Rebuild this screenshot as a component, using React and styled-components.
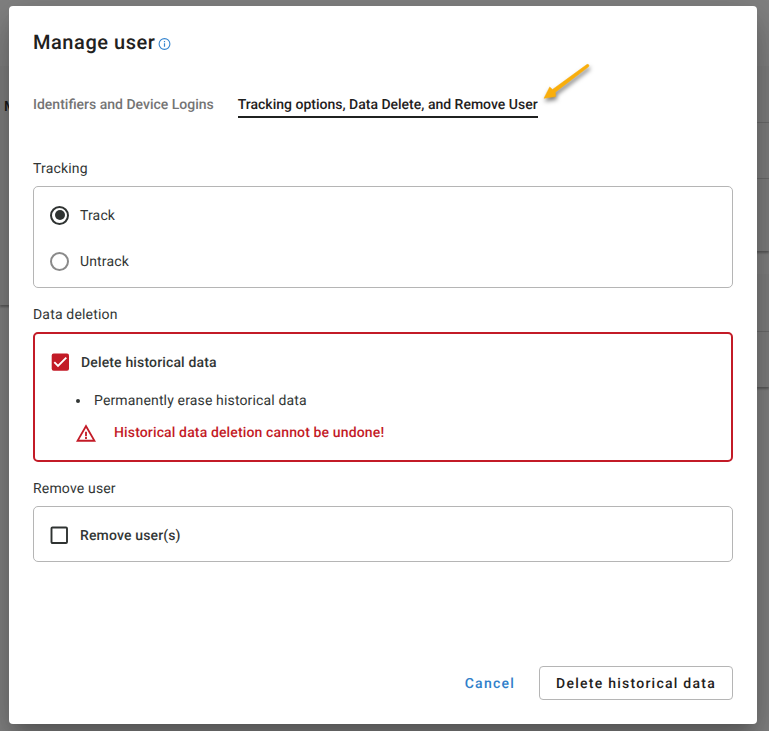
import React, { useState } from "react";
import styled, { createGlobalStyle } from "styled-components";

const GlobalStyle = createGlobalStyle`
  * {
    box-sizing: border-box;
  }
  body {
    margin: 0;
    overflow: hidden;
    font-family: Roboto, "Liberation Sans", sans-serif;
    color: #323635;
    text-rendering: geometricPrecision;
  }
`;

const Page = styled.div`
  position: relative;
  width: 769px;
  height: 731px;
  padding-top: 66px;
  display: flex;
  justify-content: space-between;
  align-items: flex-start;
  overflow: hidden;
  background: #828282;
`;

const BackColumn = styled.div`
  width: ${(props) => props.$width};
  display: flex;
  flex-direction: column;
  gap: 23px;
`;

const BackCard = styled.div`
  height: ${(props) => props.$height};
  padding-top: ${(props) => props.$top || "0"};
  background: #7f7f7f;
  box-shadow: 0 2px 2px rgba(0, 0, 0, 0.3);
`;

const BackRow = styled.div`
  height: 56px;
  border-top: 1px solid #6c6c6c;
`;

const BackTitle = styled.div`
  padding: 32px 0 0 4px;
  color: #181818;
  font-size: 14px;
  line-height: 18px;
  font-weight: 500;
`;

const Dialog = styled.div`
  position: absolute;
  top: 6px;
  left: 9px;
  width: 748px;
  height: 718px;
  padding: 24px;
  display: flex;
  flex-direction: column;
  background: #ffffff;
  border-radius: 4px;
  box-shadow: 0 11px 15px -7px rgba(0, 0, 0, 0.2),
    0 24px 38px 3px rgba(0, 0, 0, 0.14), 0 9px 46px 8px rgba(0, 0, 0, 0.12);
`;

const Title = styled.h1`
  margin: 0;
  height: 24px;
  display: flex;
  align-items: center;
  color: #1f2120;
  font-size: 20px;
  line-height: 24px;
  font-weight: 500;
  letter-spacing: 0.55px;
  white-space: nowrap;

  svg {
    margin: 4px 0 0 3px;
  }
`;

const Tabs = styled.div`
  display: flex;
  gap: 24px;
  margin-top: 40px;
`;

const Tab = styled.button`
  height: 24px;
  padding: 1px 0;
  border: 0;
  border-bottom: 2px solid
    ${(props) => (props.$active ? "#1f2120" : "transparent")};
  background: none;
  color: ${(props) => (props.$active ? "#1f2120" : "#747474")};
  font-family: inherit;
  font-size: 14px;
  line-height: 20px;
  font-weight: 500;
  text-rendering: inherit;
  white-space: nowrap;
`;

const SectionLabel = styled.div`
  margin-top: ${(props) => props.$top};
  height: 20px;
  font-size: 14px;
  line-height: 22px;
  letter-spacing: 0.17px;
`;

const Panel = styled.div`
  margin-top: 8px;
  height: ${(props) => props.$height};
  padding: ${(props) => props.$padding};
  border: ${(props) =>
    props.$danger ? "2px solid #c31b27" : "1px solid #b5b5b5"};
  border-radius: 5px;
`;

const Text = styled.span`
  padding-top: 1px;
`;

const Option = styled.label`
  display: flex;
  align-items: center;
  gap: ${(props) => props.$gap || "11px"};
  height: 20px;
  margin-bottom: ${(props) => props.$bottom || "0"};
  font-size: 14px;
  line-height: 20px;
  font-weight: ${(props) => (props.$bold ? 500 : 400)};
  letter-spacing: 0.15px;
`;

const Radio = styled.span`
  width: 19px;
  height: 19px;
  display: flex;
  align-items: center;
  justify-content: center;
  border: 2px solid ${(props) => (props.$checked ? "#2f3332" : "#8a8a8a")};
  border-radius: 50%;

  &::after {
    content: "";
    width: 10px;
    height: 10px;
    flex-shrink: 0;
    border-radius: 50%;
    background: ${(props) => (props.$checked ? "#2f3332" : "transparent")};
  }
`;

const BulletList = styled.ul`
  margin: 0;
  padding: 0 0 0 25px;
  font-size: 14px;
  line-height: 20px;
  letter-spacing: 0.15px;
`;

const Bullet = styled.li`
  display: flex;
  align-items: center;
  gap: 14px;
  height: 20px;

  &::before {
    content: "";
    width: 4px;
    height: 4px;
    margin-top: 1px;
    border-radius: 50%;
    background: #323635;
  }
`;

const Warning = styled.div`
  display: flex;
  align-items: center;
  gap: 18px;
  height: 20px;
  margin: 12px 0 0 25px;
  color: #c31b27;
  font-size: 14px;
  line-height: 20px;
  font-weight: 500;
  letter-spacing: 0.14px;

  svg {
    margin-top: 1px;
  }
`;

const Actions = styled.div`
  display: flex;
  justify-content: flex-end;
  gap: 8px;
  margin-top: auto;
`;

const Button = styled.button`
  height: 34px;
  padding: ${(props) => (props.$outlined ? "1px 16px 0" : "1px 15px 0 16px")};
  border: 1px solid ${(props) => (props.$outlined ? "#b5b5b5" : "transparent")};
  border-radius: 4px;
  background: #ffffff;
  color: ${(props) => (props.$outlined ? "#1f2120" : "#3080ca")};
  font-family: inherit;
  font-size: 14px;
  line-height: 20px;
  font-weight: 500;
  letter-spacing: 1.25px;
  text-rendering: inherit;
  white-space: nowrap;
`;

const ArrowMarker = styled.svg`
  position: absolute;
  left: 529px;
  top: 51px;
  filter: drop-shadow(1px 3px 2px rgba(0, 0, 0, 0.5));
`;

const InfoIcon = () => (
  <svg width="13" height="12" viewBox="0 0 13 12" fill="none">
    <circle cx="6.5" cy="6" r="5.4" stroke="#3585cf" strokeWidth="1.1" />
    <path d="M6.5 5.2v3.6M6.5 3v1.2" stroke="#3585cf" strokeWidth="1.2" />
  </svg>
);

const Checkbox = ({ checked }) =>
  checked ? (
    <svg width="18" height="18" viewBox="0 0 18 18" fill="none">
      <rect x="0.7" y="0.4" width="17.3" height="17.4" rx="2" fill="#c31b27" />
      <path d="M3.3 9.2l3.7 3.7 8.3-8.3" stroke="#ffffff" strokeWidth="1.9" />
    </svg>
  ) : (
    <svg width="18" height="18" viewBox="0 0 18 18" fill="none">
      <rect
        x="1.5"
        y="1.5"
        width="15.5"
        height="15.5"
        rx="1"
        stroke="#2f3332"
        strokeWidth="1.9"
      />
    </svg>
  );

const WarningIcon = () => (
  <svg width="20" height="18" viewBox="0 0 22 19" fill="#c31b27">
    <path d="M11 3.99L18.53 17H3.47L11 3.99M11 0L0 19h22L11 0zm1 14h-2v2h2v-2zm0-6h-2v5h2V8z" />
  </svg>
);

const Arrow = () => (
  <ArrowMarker width="60" height="48" viewBox="0 0 60 48">
    <path
      d="M48.8 7.6c1.6-1 2.9 1 1.7 2.2L17.3 35.2l.4 4.4L6 41.3l5.7-11.4 2.8 2.6z"
      fill="#f9ae0c"
      stroke="#f9ae0c"
      strokeWidth="0.5"
    />
  </ArrowMarker>
);

const App = () => {
  const [tab, setTab] = useState("options");
  const [tracked, setTracked] = useState(true);
  const [erase, setErase] = useState(true);
  const [remove, setRemove] = useState(false);

  return (
    <Page>
      <GlobalStyle />
      <BackColumn $width="160px">
        <BackCard $height="239px">
          <BackTitle>M</BackTitle>
        </BackCard>
      </BackColumn>
      <BackColumn $width="160px">
        <BackCard $height="185px" $top="56px">
          <BackRow />
          <BackRow />
        </BackCard>
        <BackCard $height="113px" $top="57px">
          <BackRow />
        </BackCard>
      </BackColumn>

      <Dialog role="dialog">
        <Title>
          Manage user
          <InfoIcon />
        </Title>
        <Tabs>
          <Tab $active={tab === "logins"} onClick={() => setTab("logins")}>
            Identifiers and Device Logins
          </Tab>
          <Tab $active={tab === "options"} onClick={() => setTab("options")}>
            Tracking options, Data Delete, and Remove User
          </Tab>
        </Tabs>

        <SectionLabel $top="40px">Tracking</SectionLabel>
        <Panel $height="102px" $padding="18px 16px">
          <Option $bottom="26px" onClick={() => setTracked(true)}>
            <Radio $checked={tracked} />
            <Text>Track</Text>
          </Option>
          <Option onClick={() => setTracked(false)}>
            <Radio $checked={!tracked} />
            <Text>Untrack</Text>
          </Option>
        </Panel>

        <SectionLabel $top="16px">Data deletion</SectionLabel>
        <Panel $height="130px" $padding="18px 16px" $danger>
          <Option
            $bold
            $gap="12px"
            $bottom="18px"
            onClick={() => setErase(!erase)}
          >
            <Checkbox checked={erase} />
            <Text>Delete historical data</Text>
          </Option>
          <BulletList>
            <Bullet>
              <Text>Permanently erase historical data</Text>
            </Bullet>
          </BulletList>
          <Warning>
            <WarningIcon />
            <Text>Historical data deletion cannot be undone!</Text>
          </Warning>
        </Panel>

        <SectionLabel $top="16px">Remove user</SectionLabel>
        <Panel $height="56px" $padding="18px 16px">
          <Option $bold $gap="12px" onClick={() => setRemove(!remove)}>
            <Checkbox checked={remove} />
            <Text>Remove user(s)</Text>
          </Option>
        </Panel>

        <Actions>
          <Button>Cancel</Button>
          <Button $outlined>Delete historical data</Button>
        </Actions>
        <Arrow />
      </Dialog>
    </Page>
  );
};

export default App;
